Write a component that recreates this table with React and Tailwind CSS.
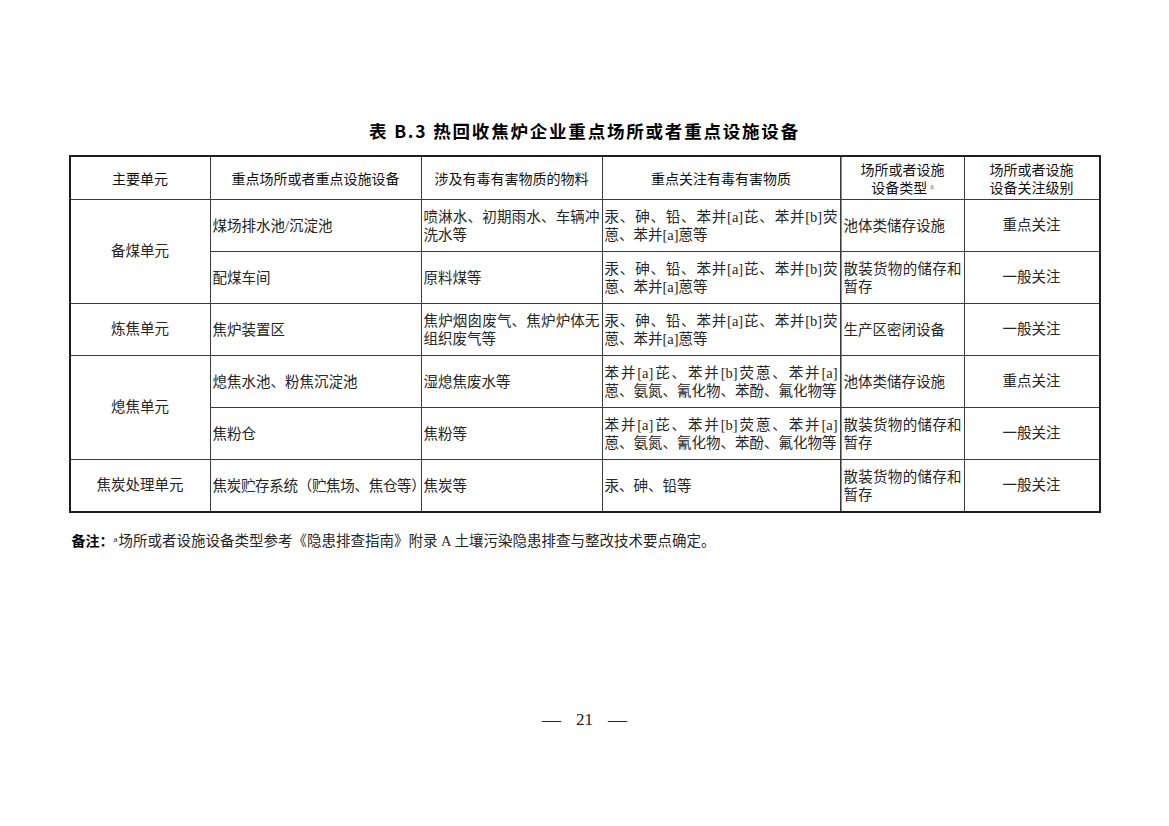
import React from 'react';

// 表 B.3 数据
const rows = [
  {
    unit: '备煤单元',
    span: 2,
    place: ['煤场排水池/沉淀池'],
    material: ['喷淋水、初期雨水、车辆冲', '洗水等'],
    substance: ['汞、砷、铅、苯并[a]芘、苯并[b]荧', '蒽、苯并[a]蒽等'],
    type: ['池体类储存设施'],
    level: '重点关注',
  },
  {
    place: ['配煤车间'],
    material: ['原料煤等'],
    substance: ['汞、砷、铅、苯并[a]芘、苯并[b]荧', '蒽、苯并[a]蒽等'],
    type: ['散装货物的储存和', '暂存'],
    level: '一般关注',
  },
  {
    unit: '炼焦单元',
    span: 1,
    place: ['焦炉装置区'],
    material: ['焦炉烟囱废气、焦炉炉体无', '组织废气等'],
    substance: ['汞、砷、铅、苯并[a]芘、苯并[b]荧', '蒽、苯并[a]蒽等'],
    type: ['生产区密闭设备'],
    level: '一般关注',
  },
  {
    unit: '熄焦单元',
    span: 2,
    place: ['熄焦水池、粉焦沉淀池'],
    material: ['湿熄焦废水等'],
    substance: ['苯并[a]芘、苯并[b]荧蒽、苯并[a]', '蒽、氨氮、氰化物、苯酚、氟化物等'],
    type: ['池体类储存设施'],
    level: '重点关注',
  },
  {
    place: ['焦粉仓'],
    material: ['焦粉等'],
    substance: ['苯并[a]芘、苯并[b]荧蒽、苯并[a]', '蒽、氨氮、氰化物、苯酚、氟化物等'],
    type: ['散装货物的储存和', '暂存'],
    level: '一般关注',
  },
  {
    unit: '焦炭处理单元',
    span: 1,
    place: ['焦炭贮存系统（贮焦场、焦仓等）'],
    material: ['焦炭等'],
    substance: ['汞、砷、铅等'],
    type: ['散装货物的储存和', '暂存'],
    level: '一般关注',
    tight: true,
  },
];

const song = "font-['Liberation_Serif','Noto_Sans_CJK_SC',serif]";
const hei = "font-['Noto_Sans_CJK_SC','Liberation_Sans',sans-serif]";

// 正文单元格：换行前的行两端对齐，末行左对齐
const TextCell = ({ lines, extra = '', tight = false }) => (
  <div className={`bg-white flex flex-col justify-center px-[2px] leading-[18px] whitespace-nowrap ${extra}`}>
    {lines.map((line, i) => (
      <div
        key={i}
        className={
          i < lines.length - 1
            ? 'text-justify [text-align-last:justify]'
            : tight
            ? 'tracking-[-0.3px]'
            : ''
        }
      >
        {line}
      </div>
    ))}
  </div>
);

const HeadCell = ({ children, extra = '' }) => (
  <div className={`bg-white flex flex-col items-center justify-center text-center leading-[18px] ${extra}`}>
    {children}
  </div>
);

export default function App() {
  return (
    <div className="min-h-screen w-full bg-white pt-[119px]">
      <div className="w-[1032px] mx-auto">
        <h1
          className={`${hei} text-center text-[17.5px] leading-[24px] font-bold tracking-[1.8px] text-black`}
        >
          表 B.3 热回收焦炉企业重点场所或者重点设施设备
        </h1>

        <div className="mt-[12px] border-2 border-[#1e1e1e]">
          <div
            className={`grid grid-cols-[139px_210px_180px_237px_123px_134px] grid-rows-[42px_repeat(6,51px)] gap-px bg-[#3c3c3c] text-[14.5px] text-[#262626] ${song}`}
          >
            {/* 表头 */}
            <HeadCell extra={`${hei} text-[14px] text-[#111]`}>主要单元</HeadCell>
            <HeadCell extra={`${hei} text-[14px] text-[#111]`}>重点场所或者重点设施设备</HeadCell>
            <HeadCell extra={`${hei} text-[14px] text-[#111]`}>涉及有毒有害物质的物料</HeadCell>
            <HeadCell extra={`${hei} text-[14px] text-[#111]`}>重点关注有毒有害物质</HeadCell>
            <HeadCell extra={`${hei} text-[14px] text-[#111] border-l border-[#8a8a8a]`}>
              <div>场所或者设施</div>
              <div>
                设备类型
                <sup className="ml-[3px] text-[8px] text-[#777] font-['Liberation_Serif',serif]">a</sup>
              </div>
            </HeadCell>
            <HeadCell extra={`${hei} text-[14px] text-[#111]`}>
              <div>场所或者设施</div>
              <div>设备关注级别</div>
            </HeadCell>

            {/* 数据行 */}
            {rows.map((r, idx) => (
              <React.Fragment key={idx}>
                {r.unit && (
                  <div
                    className={`bg-white flex items-center justify-center ${
                      r.span === 2 ? 'row-span-2' : ''
                    }`}
                  >
                    {r.unit}
                  </div>
                )}
                <TextCell lines={r.place} tight={r.tight} />
                <TextCell lines={r.material} />
                <TextCell lines={r.substance} />
                <TextCell lines={r.type} extra="border-l border-[#8a8a8a]" />
                <div className="bg-white flex items-center justify-center">{r.level}</div>
              </React.Fragment>
            ))}
          </div>
        </div>

        <p className={`mt-[17px] pl-[3px] leading-[20px] text-[14.5px] text-[#262626] ${song}`}>
          <span className={`${hei} font-bold text-[14px] text-black`}>备注：</span>
          <sup className="text-[9px] mr-[1px]">a</sup>
          场所或者设施设备类型参考《隐患排查指南》附录 A 土壤污染隐患排查与整改技术要点确定。
        </p>

        <div className="mt-[157px] flex justify-center items-center gap-[15px] leading-[24px] font-['Liberation_Serif',serif] text-[#222]">
          <span className="text-[19px]">—</span>
          <span className="text-[17px]">21</span>
          <span className="text-[19px]">—</span>
        </div>
      </div>
    </div>
  );
}
